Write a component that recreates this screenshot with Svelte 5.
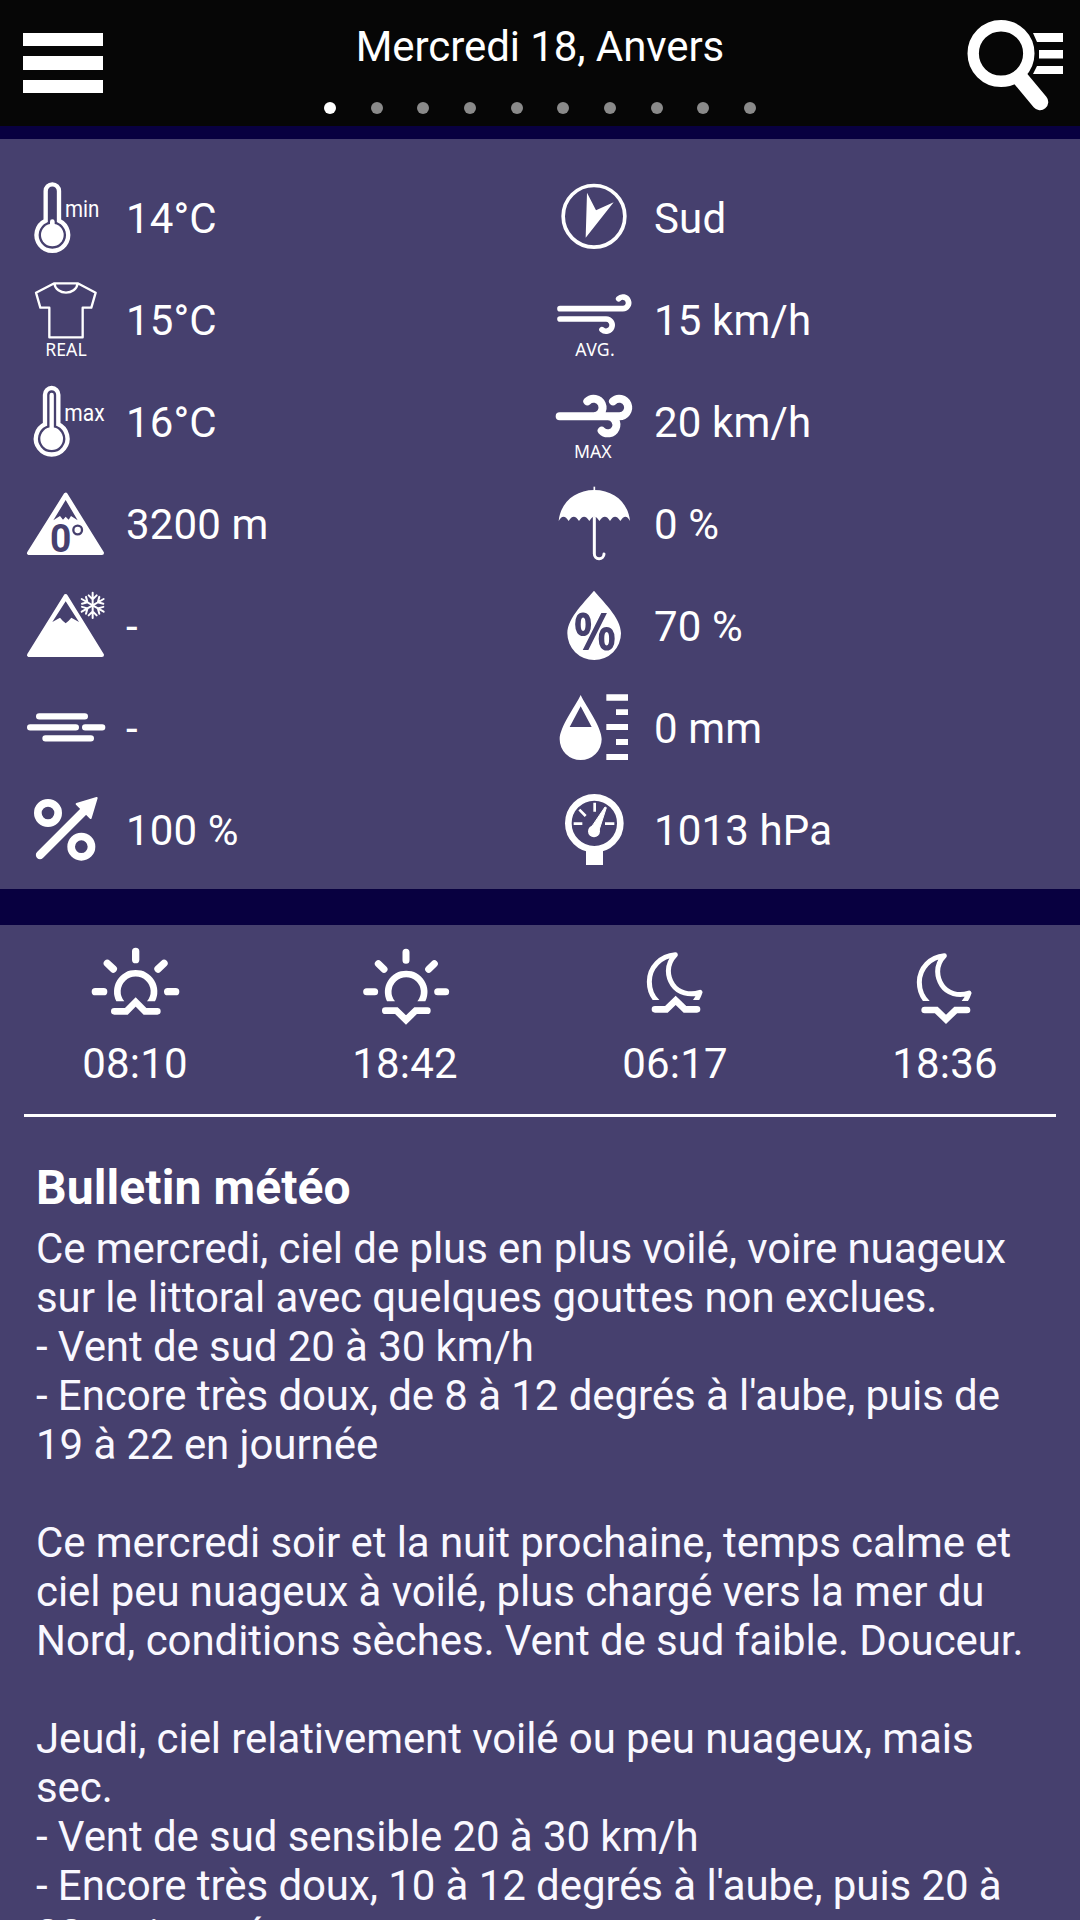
<script>
	const titre = 'Mercredi 18, Anvers';
	const pages = Array.from({ length: 10 }, (_, i) => i);
	let pageActive = 0;

	const mesures = [
		{ icone: 'min', valeur: '14°C' },
		{ icone: 'direction', valeur: 'Sud' },
		{ icone: 'real', valeur: '15°C' },
		{ icone: 'vent', valeur: '15 km/h' },
		{ icone: 'max', valeur: '16°C' },
		{ icone: 'rafale', valeur: '20 km/h' },
		{ icone: 'isotherme', valeur: '3200 m' },
		{ icone: 'parapluie', valeur: '0 %' },
		{ icone: 'neige', valeur: '-' },
		{ icone: 'humidite', valeur: '70 %' },
		{ icone: 'brouillard', valeur: '-' },
		{ icone: 'pluie', valeur: '0 mm' },
		{ icone: 'fiabilite', valeur: '100 %' },
		{ icone: 'pression', valeur: '1013 hPa' }
	];

	const astres = [
		{ icone: 'lever-soleil', heure: '08:10' },
		{ icone: 'coucher-soleil', heure: '18:42' },
		{ icone: 'lever-lune', heure: '06:17' },
		{ icone: 'coucher-lune', heure: '18:36' }
	];

	const bulletin = [
		'Ce mercredi, ciel de plus en plus voilé, voire nuageux',
		'sur le littoral avec quelques gouttes non exclues.',
		'- Vent de sud 20 à 30 km/h',
		"- Encore très doux, de 8 à 12 degrés à l'aube, puis de",
		'19 à 22 en journée',
		'',
		'Ce mercredi soir et la nuit prochaine, temps calme et',
		'ciel peu nuageux à voilé, plus chargé vers la mer du',
		'Nord, conditions sèches. Vent de sud faible. Douceur.',
		'',
		'Jeudi, ciel relativement voilé ou peu nuageux, mais',
		'sec.',
		'- Vent de sud sensible 20 à 30 km/h',
		"- Encore très doux, 10 à 12 degrés à l'aube, puis 20 à",
		'22 en journée'
	].join('\n');
</script>

<main>
	<header>
		<button class="menu" aria-label="Menu">
			<span></span>
			<span></span>
			<span></span>
		</button>
		<div class="centre">
			<h1>{titre}</h1>
			<div class="points">
				{#each pages as page}
					<i class:actif={page === pageActive}></i>
				{/each}
			</div>
		</div>
		<button class="recherche" aria-label="Rechercher">
			<svg viewBox="0 0 110 110">
				<circle cx="41" cy="43.5" r="27.8" fill="none" stroke="#fff" stroke-width="11.4" />
				<path d="M60 68L80 92" stroke="#fff" stroke-width="16.5" stroke-linecap="round" />
				<path d="M73 23h30v9h-26zM79 40h24v8.500h-24zM77 56h26v8h-30z" fill="#fff" />
			</svg>
		</button>
	</header>

	<section class="mesures">
		{#each mesures as { icone, valeur }}
			<div class="mesure">
				<svg class="icone" viewBox="0 0 270 306">
					{#if icone === 'min'}
						<path class="trait" stroke-width="13" d="M77 161V72a20 20 0 0 1 40 0V161A47.500 47.500 0 1 1 77 161Z" />
						<circle cx="97" cy="204" r="34" />
						<path class="trait rond" stroke-width="14" d="M97 164v20" />
						<text class="cond" x="135" y="150" font-size="72" textLength="103" lengthAdjust="spacingAndGlyphs">min</text>
					{:else if icone === 'max'}
						<path class="trait" stroke-width="13" d="M75 160V71a20 20 0 0 1 40 0V160A47.500 47.500 0 1 1 75 160Z" />
						<circle cx="95" cy="203" r="34" />
						<path class="trait rond" stroke-width="13" d="M95 72v110" />
						<text class="cond" x="133" y="149" font-size="71" textLength="121" lengthAdjust="spacingAndGlyphs">max</text>
					{:else if icone === 'real'}
						<path class="trait joint" stroke-width="7" d="M103 43H173L227 71L214 116H188V205H88V116H61L48 71ZM103 43C108 80 168 80 173 43" />
						<text x="76" y="261" font-size="53" textLength="124">REAL</text>
					{:else if icone === 'direction'}
						<circle class="trait" cx="138" cy="148" r="92.500" stroke-width="11" />
						<path d="M117 77L144 130L197 106L113 212Z" />
					{:else if icone === 'vent'}
						<path class="trait rond" stroke-width="17" d="M36 119H224.500A17.500 17.500 0 1 0 212 89M36 150H174A18.300 18.300 0 1 1 162 182" />
						<text x="82" y="261" font-size="53" textLength="118">AVG.</text>
					{:else if icone === 'rafale'}
						<path class="trait rond" stroke-width="24" d="M35 136H213A26.500 26.500 0 1 0 195 91M137 136A26.500 26.500 0 1 0 118 91M180 136A25.500 25.500 0 1 1 161 179" />
						<text x="78" y="261" font-size="53" textLength="113">MAX</text>
					{:else if icone === 'isotherme'}
						<path class="joint plein" d="M137 65L27 240H246Z" stroke-width="12" />
						<path class="fond" d="M137 81L100 142L120 129L129 140L137 131L146 140L153 129L173 142Z" />
						<text class="fond zero" x="90" y="238" font-size="117" textLength="64" lengthAdjust="spacingAndGlyphs">0</text>
						<circle cx="173" cy="171" r="13" stroke-width="7" fill="none" stroke="#46406e" />
					{:else if icone === 'neige'}
						<path class="joint plein" d="M137 63L27 240H246Z" stroke-width="12" />
						<path class="fond" d="M137 79L97 141L120 128L128 137L137 145L146 137L154 128L177 141Z" />
						{#each [0, 60, 120, 180, 240, 300] as angle}
							<path class="trait rond" stroke-width="6" d="M218 91V53M206 61L218 73L230 61" transform="rotate({angle} 218 91)" />
						{/each}
					{:else if icone === 'brouillard'}
						<path class="trait rond" stroke-width="19" d="M57.500 118H194.500M30.500 151H167.500M195.500 151H246.500M76.500 184H212.500" />
					{:else if icone === 'fiabilite'}
						<circle class="trait" cx="84" cy="102" r="30.500" stroke-width="23" />
						<circle class="trait" cx="184" cy="203" r="30.500" stroke-width="23" />
						<path class="trait rond" stroke-width="25" d="M60 228L195 93" />
						<path class="joint plein" stroke-width="6" d="M230 57L170 75L212 117Z" />
					{:else if icone === 'parapluie'}
						<path d="M32 144C37 90 80 51 139 51S241 90 246 144Q233 118 217 144Q201 118 186 144Q171 118 154 144Q139 118 124 144Q108 118 93 144Q77 118 62 144Q46 118 32 144Z" />
						<path class="trait" stroke-width="5" d="M139 41V60" />
						<path class="trait rond" stroke-width="9" d="M139 134V242a14.500 14.500 0 0 0 29 1" />
					{:else if icone === 'humidite'}
						<path d="M138 47C160 75 219 127 219 175A80.500 80 0 0 1 58 175C58 127 116 75 138 47Z" />
						<text class="fond pourcent" x="77" y="225" font-size="156" textLength="127" lengthAdjust="spacingAndGlyphs">%</text>
					{:else if icone === 'pluie'}
						<path fill-rule="evenodd" d="M98 54C114 88 161 150 161 187A63 62 0 0 1 35 187C35 150 82 88 98 54ZM98 88L65 150H131Z" />
						<path d="M175 52h65v19h-65zM204 97h36v17h-36zM175 141h65v18h-65zM204 186h36v18h-36zM175 231h65v18h-65z" />
					{:else}
						<circle class="trait" cx="139" cy="133" r="78" stroke-width="20" />
						<path d="M114 213h51v45h-51z" />
						<circle cx="138" cy="157" r="18" />
						<path class="trait" stroke-width="8" d="M77 134h26M171 134h28M140 71v27M94 92L113 111" />
						<path class="joint plein" stroke-width="3" d="M171 84L175 86L151 160L127 149Z" />
					{/if}
				</svg>
				<span>{valeur}</span>
			</div>
		{/each}
	</section>

	<section class="details">
		<div class="astres">
			{#each astres as { icone, heure }}
				<div class="astre">
					<svg viewBox="0 0 270 270">
						{#if icone === 'lever-soleil'}
							<path d="M79 184A65 65 0 1 1 195 184H171A45 45 0 1 0 103 184Z" />
							<path class="trait rond" stroke-width="22" d="M137 34v25M52 70L70 87M222 70L204 87M16 155h25M233 155h24" />
							<path class="trait horizon" d="M73 214H109L137 186L165 214H202" />
						{:else if icone === 'coucher-soleil'}
							<path d="M81 184A64 64 0 1 1 196 184H172A44 44 0 1 0 105 184Z" />
							<path class="trait rond" stroke-width="21" d="M138 37v24M55 71L72 88M223 71L206 88M20 155h24M233 155h24" />
							<path class="trait horizon" d="M76 212H109L138 240L167 212H202" />
						{:else if icone === 'lever-lune'}
							<clipPath id="coupe-lever"><rect width="270" height="180" /></clipPath>
							<path class="trait joint" clip-path="url(#coupe-lever)" stroke-width="15" d="M96 196C74 181 58 156 58 125C58 82 92 47 136 44C105 76 114 113 128 134C144 158 178 168 210 157C205 172 193 190 178 198" />
							<path class="trait horizon" d="M75 208H109L137 181L165 208H201" />
						{:else}
							<clipPath id="coupe-coucher"><rect width="270" height="183" /></clipPath>
							<path class="trait joint" clip-path="url(#coupe-coucher)" stroke-width="15" d="M96 198C74 183 58 158 58 127C58 84 92 50 133 47C103 78 112 115 126 136C142 160 175 170 207 159C202 174 190 192 175 200" />
							<path class="trait horizon" d="M74 210H109L138 238L167 210H201" />
						{/if}
					</svg>
					<span>{heure}</span>
				</div>
			{/each}
		</div>
		<article>
			<h2>Bulletin météo</h2>
			<p>{bulletin}</p>
		</article>
	</section>
</main>

<style>
	:global(body) {
		margin: 0;
		background: #080040;
		overflow: hidden;
	}

	main {
		width: 1080px;
		height: 1920px;
		overflow: hidden;
		font-family: Roboto, sans-serif;
		font-size: 42px;
		line-height: 49px;
		color: #fff;
	}

	header {
		display: flex;
		justify-content: space-between;
		height: 126px;
		background: #060606;
	}

	button {
		padding: 0;
		border: 0;
		background: none;
	}

	.menu {
		display: flex;
		flex-direction: column;
		gap: 10px;
		width: 120px;
		padding: 33px 17px 0 23px;
	}

	.menu span {
		width: 80px;
		height: 13.400px;
		background: #fff;
	}

	.centre {
		display: flex;
		flex-direction: column;
		align-items: center;
		padding-top: 22px;
	}

	h1 {
		margin: 0;
		font-size: 42px;
		font-weight: 400;
		letter-spacing: -0.08px;
	}

	.points {
		display: flex;
		gap: 34.700px;
		margin-top: 31px;
	}

	.points i {
		width: 12px;
		height: 12px;
		border-radius: 50%;
		background: #8a8a8a;
	}

	.points .actif {
		background: #fff;
	}

	.recherche {
		display: flex;
		align-items: flex-start;
		width: 120px;
		padding-top: 10px;
	}

	.recherche svg {
		width: 110px;
		height: 110px;
	}

	.mesures {
		display: grid;
		grid-template-columns: 528px 1fr;
		grid-auto-rows: 102px;
		margin-top: 13px;
		padding: 28px 0 8px;
		letter-spacing: 0.15px;
		background: #46406e;
	}

	.mesure {
		display: flex;
		align-items: center;
		padding-left: 20px;
	}

	.icone {
		width: 90px;
		height: 102px;
		margin-right: 16px;
		letter-spacing: 0;
	}

	svg {
		fill: #fff;
		font-family: 'Noto Sans', sans-serif;
	}

	.trait {
		fill: none;
		stroke: #fff;
	}

	.rond {
		stroke-linecap: round;
	}

	.joint {
		stroke-linejoin: round;
	}

	.plein {
		stroke: #fff;
	}

	.fond {
		fill: #46406e;
	}

	.cond {
		font-family: Roboto, sans-serif;
	}

	.zero {
		font-family: Roboto, sans-serif;
		font-weight: 700;
	}

	.pourcent {
		font-weight: 700;
	}

	.horizon {
		stroke-width: 20px;
		stroke-linecap: round;
	}

	.details {
		height: 995px;
		margin-top: 36px;
		background: #46406e;
	}

	.astres {
		display: grid;
		grid-template-columns: repeat(4, 270px);
		height: 189px;
		margin: 0 24px;
		justify-content: center;
		border-bottom: 3px solid #fff;
	}

	.astre {
		display: flex;
		flex-direction: column;
		align-items: center;
		padding-top: 15px;
	}

	.astre svg {
		width: 90px;
		height: 90px;
		margin-bottom: 9px;
	}

	.astre span {
		letter-spacing: 0.15px;
	}

	article {
		padding: 43px 36px 0;
	}

	h2 {
		margin: 0 0 8px;
		font-size: 48px;
		font-weight: 700;
		line-height: 56px;
		letter-spacing: 0.1px;
	}

	p {
		margin: 0;
		white-space: pre;
		letter-spacing: -0.08px;
		color: #f9f8ff;
	}
</style>
